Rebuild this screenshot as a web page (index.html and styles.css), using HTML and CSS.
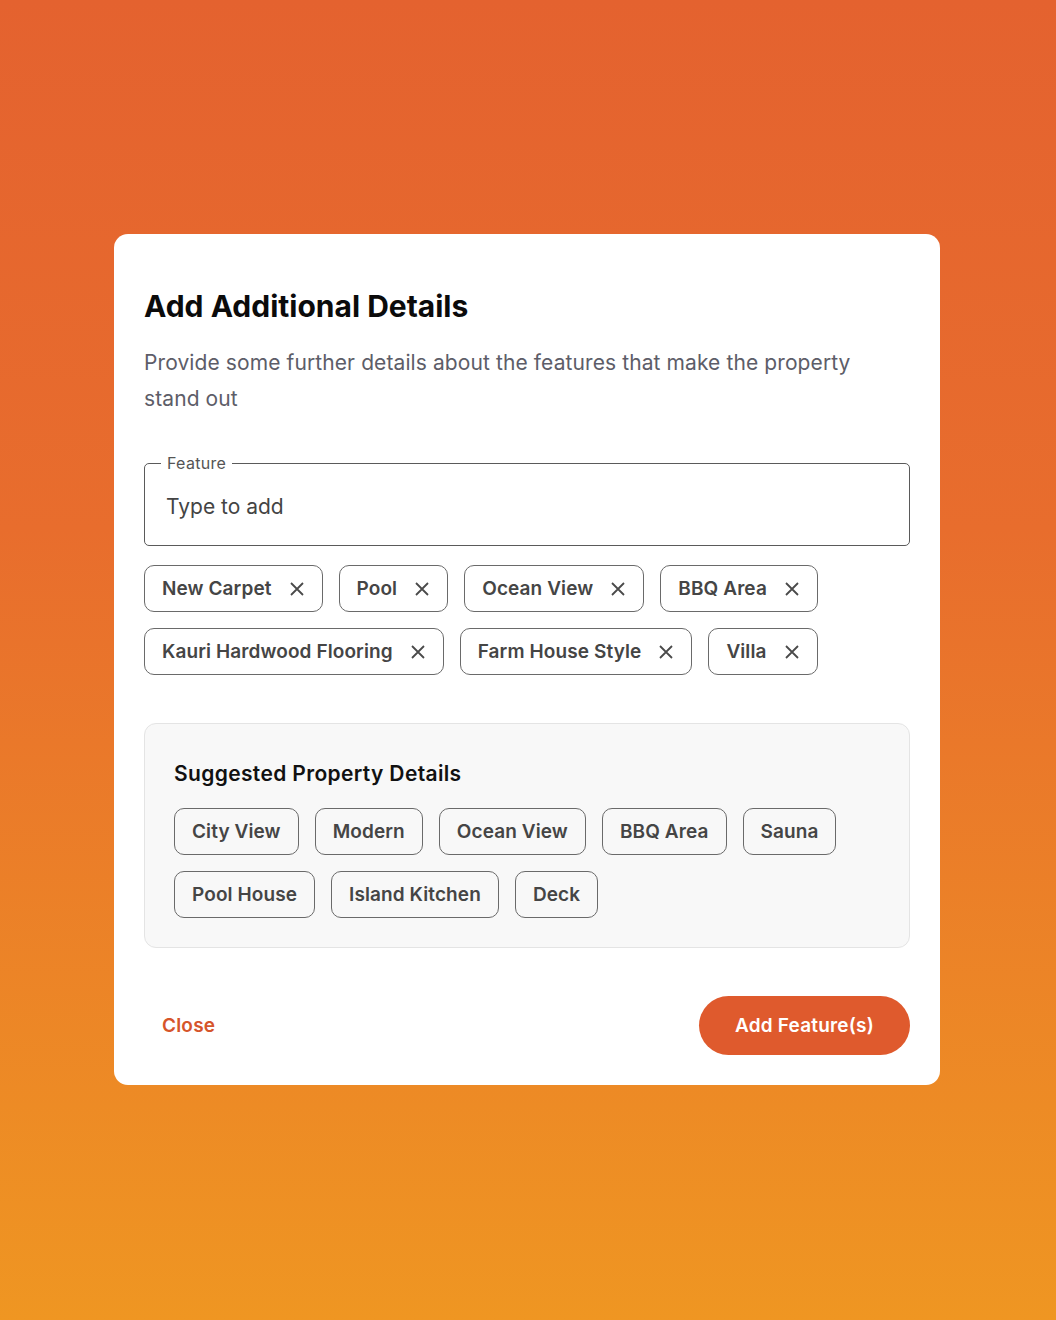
FILE: index.html
```html
<!DOCTYPE html>
<html lang="en">
<head>
<meta charset="utf-8">
<title>Add Additional Details</title>
<link rel="stylesheet" href="styles.css">
</head>
<body>
<main class="page">
  <section class="dialog">
    <h1 class="title">Add Additional Details</h1>
    <p class="subtitle">Provide some further details about the features that make the property stand out</p>

    <fieldset class="field">
      <legend class="field-label">Feature</legend>
      <input class="field-input" type="text" placeholder="Type to add">
    </fieldset>

    <div class="chips selected">
      <span class="chip">New Carpet <svg class="x" viewBox="0 0 16 16"><path d="M2 2L14 14M14 2L2 14"/></svg></span>
      <span class="chip">Pool <svg class="x" viewBox="0 0 16 16"><path d="M2 2L14 14M14 2L2 14"/></svg></span>
      <span class="chip">Ocean View <svg class="x" viewBox="0 0 16 16"><path d="M2 2L14 14M14 2L2 14"/></svg></span>
      <span class="chip">BBQ Area <svg class="x" viewBox="0 0 16 16"><path d="M2 2L14 14M14 2L2 14"/></svg></span>
      <span class="chip">Kauri Hardwood Flooring <svg class="x" viewBox="0 0 16 16"><path d="M2 2L14 14M14 2L2 14"/></svg></span>
      <span class="chip">Farm House Style <svg class="x" viewBox="0 0 16 16"><path d="M2 2L14 14M14 2L2 14"/></svg></span>
      <span class="chip">Villa <svg class="x" viewBox="0 0 16 16"><path d="M2 2L14 14M14 2L2 14"/></svg></span>
    </div>

    <div class="suggest">
      <h2 class="suggest-title">Suggested Property Details</h2>
      <div class="chips">
        <span class="chip">City View</span>
        <span class="chip">Modern</span>
        <span class="chip">Ocean View</span>
        <span class="chip">BBQ Area</span>
        <span class="chip">Sauna</span>
        <span class="chip">Pool House</span>
        <span class="chip">Island Kitchen</span>
        <span class="chip">Deck</span>
      </div>
    </div>

    <div class="actions">
      <button class="btn-close" type="button">Close</button>
      <button class="btn-add" type="button">Add Feature(s)</button>
    </div>
  </section>
</main>
</body>
</html>
```

FILE: styles.css
```css
* { box-sizing: border-box; }
html, body { margin: 0; padding: 0; }
body {
  font-family: Inter, "Noto Sans", sans-serif;
  background: linear-gradient(180deg, #e4622f 0%, #e86d2d 40%, #ef9622 100%);
  min-height: 1320px;
}
.page {
  min-height: 1320px;
  padding-top: 1px;
  display: flex;
  align-items: center;
  justify-content: center;
}
.dialog {
  width: 826px;
  margin-left: -2px;
  margin-top: -2px;
  background: #fff;
  border-radius: 14px;
  padding: 52px 30px 30px;
}
.title {
  margin: 0;
  font-size: 30px;
  line-height: 40px;
  font-weight: 700;
  color: #0b0b0b;
  letter-spacing: 0;
}
.subtitle {
  margin: 19px 0 0;
  max-width: 720px;
  font-size: 21px;
  line-height: 36px;
  color: #5d5d68;
  letter-spacing: 0.1px;
}
.field {
  margin: 37px 0 0;
  padding: 0 21px;
  border: 1.5px solid #5a5a5a;
  border-radius: 5px;
  height: 92px;
}
.field-label {
  margin-left: -5px;
  padding: 0 6px;
  font-size: 16px;
  color: #555;
  line-height: 18px;
  letter-spacing: 0.3px;
}
.field-input {
  display: block;
  width: 100%;
  border: 0;
  outline: 0;
  padding: 0;
  margin-top: 21px;
  font-family: inherit;
  font-size: 21px;
  line-height: 28px;
  color: #333;
  background: transparent;
  letter-spacing: 0;
}
.field-input::placeholder { color: #444; opacity: 1; }
.chips {
  display: flex;
  flex-wrap: wrap;
  gap: 16px;
}
.selected { margin-top: 19px; }
.chip {
  display: inline-flex;
  align-items: center;
  height: 47px;
  padding: 0 17px;
  border: 1.5px solid #6a6a6a;
  border-radius: 10px;
  font-size: 19px;
  font-weight: 600;
  color: #454545;
  letter-spacing: 0.1px;
  background: transparent;
}
.x {
  width: 16px;
  height: 16px;
  margin-left: 17px;
  stroke: #4a4a4a;
  stroke-width: 1.8;
  fill: none;
}
.suggest {
  margin-top: 48px;
  background: #f8f8f8;
  border: 1px solid #e4e4e4;
  border-radius: 12px;
  padding: 36px 29px 29px;
}
.suggest-title {
  margin: 0 0 20px;
  font-size: 21px;
  line-height: 28px;
  font-weight: 600;
  color: #111;
  letter-spacing: 0.35px;
}
.actions {
  margin-top: 48px;
  display: flex;
  align-items: center;
  justify-content: space-between;
}
.btn-close {
  border: 0;
  background: transparent;
  padding: 0 18px;
  font-family: inherit;
  font-size: 19px;
  font-weight: 600;
  color: #d6552b;
  letter-spacing: 0.2px;
}
.btn-add {
  border: 0;
  height: 59px;
  padding: 0 36px;
  border-radius: 30px;
  background: #df5a2d;
  color: #fff;
  font-family: inherit;
  font-size: 19px;
  font-weight: 600;
  letter-spacing: 0.2px;
}
```
